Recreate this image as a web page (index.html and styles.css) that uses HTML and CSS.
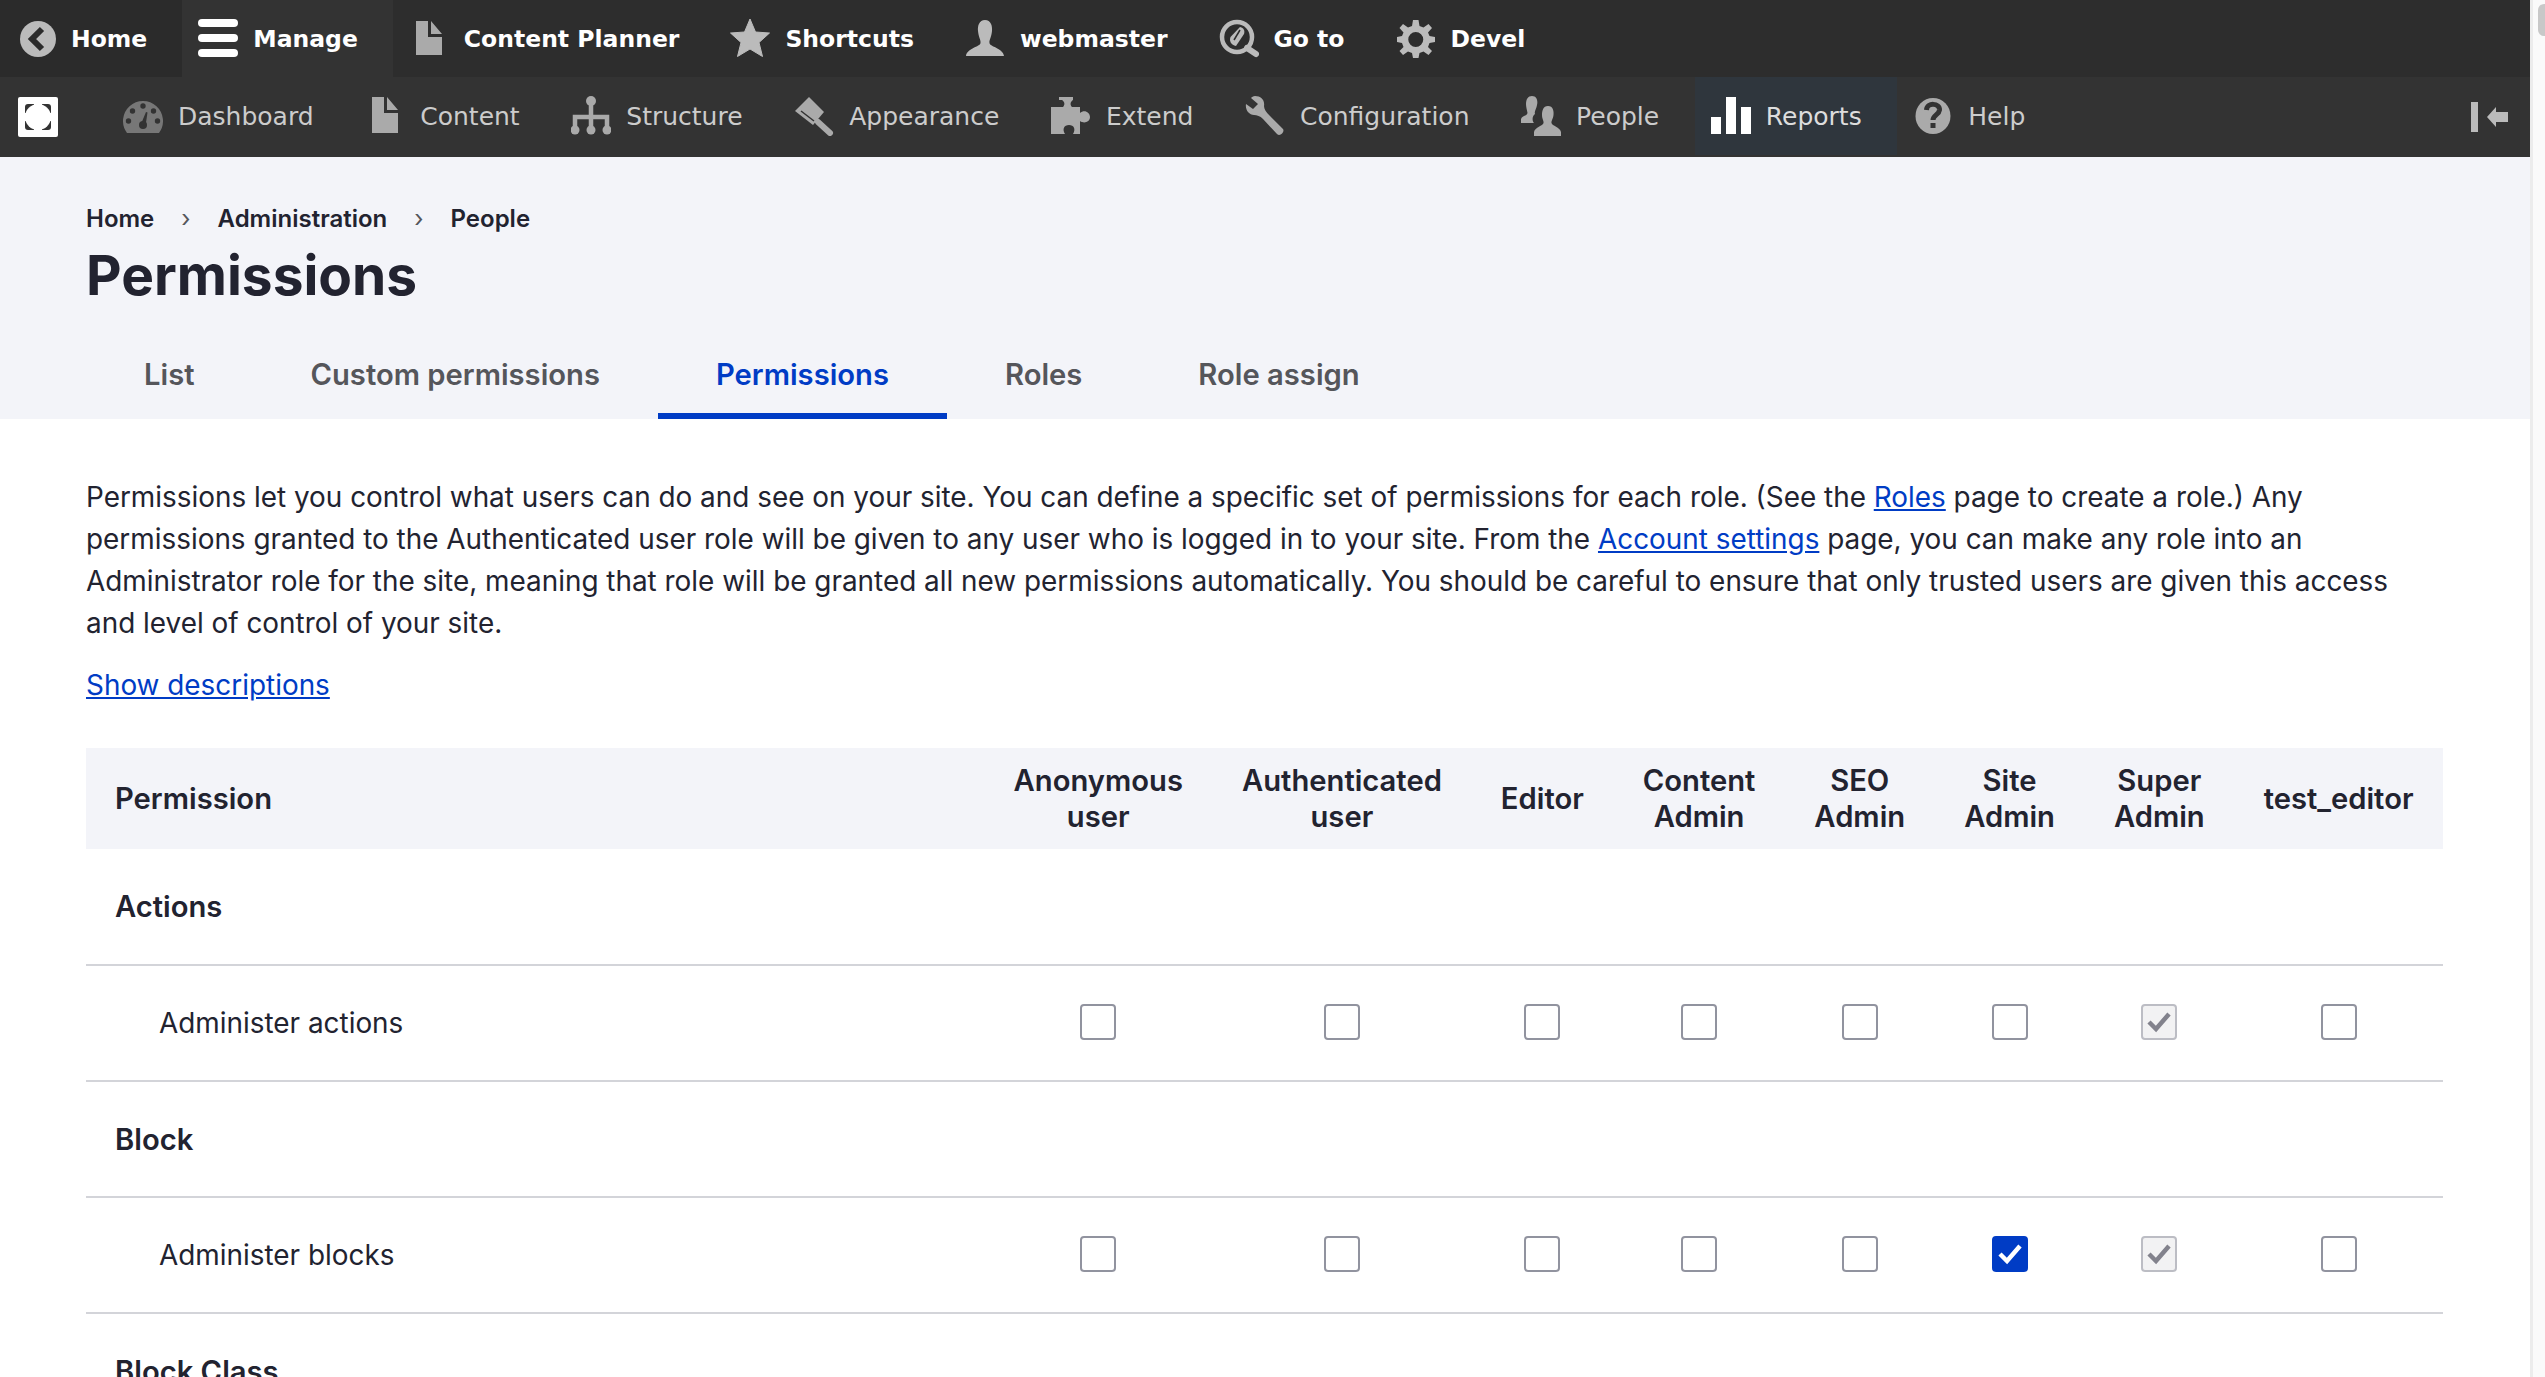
FILE: index.html

```html
<!DOCTYPE html>
<html lang="en">
<head>
    <meta charset="UTF-8">
    <meta name="viewport" content="width=device-width, initial-scale=1.0">
    <title>Permissions</title>
    <link rel="stylesheet" href="styles.css">
</head>
<body>
<div class="page">
    <nav class="toolbar-bar">
        <a class="bar-item bar-home" href="#">
            <svg class="icon" viewBox="0 0 40 40"><circle cx="22" cy="20" r="18" fill="#bbb"/><path d="M26 10 L16 20 L26 30" fill="none" stroke="#2b2b2b" stroke-width="6"/></svg>
            Home</a>
        <a class="bar-item bar-manage" href="#">
            <svg class="icon" viewBox="0 0 40 40"><rect x="0" y="0" width="40" height="8" rx="4" fill="#fff"/><rect x="0" y="15" width="40" height="8" rx="4" fill="#fff"/><rect x="0" y="30" width="40" height="8" rx="4" fill="#fff"/></svg>
            Manage</a>
        <a class="bar-item" href="#">
            <svg class="icon" viewBox="0 0 40 40"><path d="M7 2 H19 V18 H33 V36 H7 Z M22 2 L33 15 H22 Z" fill="#aaa"/></svg>
            Content Planner</a>
        <a class="bar-item" href="#">
            <svg class="icon" viewBox="0 0 40 40"><path d="M20 0 L25.500 13 L39.500 14 L29 23.500 L32.500 37.500 L20 30 L7.500 37.500 L11 23.500 L0.500 14 L14.500 13 Z" fill="#bbb" stroke="#bbb" stroke-linejoin="round"/></svg>
            Shortcuts</a>
        <a class="bar-item" href="#">
            <svg class="icon" viewBox="0 0 40 40"><path d="M20 1 C26 1 27.500 7 27 12 C26.500 18 24 21 24.500 24 C25 28 38 29 39 37 H1 C2 29 15 28 15.500 24 C16 21 13.500 18 13 12 C12.500 7 14 1 20 1 Z" fill="#bbb"/></svg>
            webmaster</a>
        <a class="bar-item" href="#">
            <svg class="icon" viewBox="0 0 40 40"><circle cx="18" cy="18" r="15" fill="none" stroke="#bbb" stroke-width="4.500"/><path d="M21 8 C25 9 26 12 25 15 L17 27 C12 26 10 22 11.500 18 Z" fill="#bbb"/><path d="M15 21 L21 11" stroke="#2d2d2d" stroke-width="1.500"/><path d="M28 29 L37 35" stroke="#bbb" stroke-width="6" stroke-linecap="round"/></svg>
            Go to</a>
        <a class="bar-item" href="#">
            <svg class="icon" viewBox="0 0 40 40"><path d="M17 1 H22.500 L23.500 7 L27.500 8.500 L32.500 5 L36 9 L32 13.500 L33.500 17 L39 18 V23 L33.500 24 L32 28 L36 32 L32.500 36 L27.500 32.500 L23.500 34 L22.500 39 H17 L16 34 L12 32.500 L7 36 L3.500 32 L7.500 28 L6 24 L1 23 V18 L6 17 L7.500 13.500 L3.500 9 L7 5 L12 8.500 L16 7 Z M19.750 13 A7.500 7.500 0 1 0 19.760 28 A7.500 7.500 0 1 0 19.750 13 Z" fill="#bbb" fill-rule="evenodd"/></svg>
            Devel</a>
    </nav>
    <nav class="toolbar-tray">
        <div class="tray-logo">
            <svg class="logo" viewBox="0 0 40 40"><rect width="40" height="40" rx="2" fill="#fff"/><rect x="7" y="7" width="26" height="26" rx="3" fill="#333"/><circle cx="20" cy="20" r="13" fill="#fff"/><rect x="16" y="5" width="8" height="30" fill="#fff"/><rect x="5" y="16" width="30" height="8" fill="#fff"/></svg>
        </div>
        <a class="tray-item" href="#">
            <svg class="icon" viewBox="0 0 40 40"><path d="M4 37 A20 20 0 1 1 36 37 Z" fill="#777"/><g fill="#333"><circle cx="20" cy="10" r="2.700"/><circle cx="9.500" cy="15" r="2.700"/><circle cx="30.500" cy="15" r="2.700"/><circle cx="5.500" cy="25" r="2.700"/><circle cx="34.500" cy="25" r="2.700"/><circle cx="20" cy="29" r="4"/><path d="M18 28 L23 16 L24.500 16.500 L22.500 30 Z"/></g></svg>
            Dashboard</a>
        <a class="tray-item" href="#">
            <svg class="icon" viewBox="0 0 40 40"><path d="M7 1 H19 V17 H33 V37 H7 Z M22 1 L33 14 H22 Z" fill="#aaa"/></svg>
            Content</a>
        <a class="tray-item" href="#">
            <svg class="icon" viewBox="0 0 40 40"><circle cx="20" cy="5" r="5" fill="#aaa"/><circle cx="4" cy="34" r="4.500" fill="#aaa"/><circle cx="20" cy="34" r="4.500" fill="#aaa"/><circle cx="36" cy="34" r="4.500" fill="#aaa"/><path d="M20 5 V34 M4 34 V21 H36 V34" fill="none" stroke="#aaa" stroke-width="4.500"/></svg>
            Structure</a>
        <a class="tray-item" href="#">
            <svg class="icon" viewBox="0 0 40 40"><path d="M15 1 L30 16 L19 29 L1 15 Z" fill="#aaa"/><path d="M7 15 L20 25" stroke="#333" stroke-width="1.500"/><path d="M24 26 L36 37" stroke="#aaa" stroke-width="6" stroke-linecap="round"/></svg>
            Appearance</a>
        <a class="tray-item" href="#">
            <svg class="icon" viewBox="0 0 40 40"><path d="M8 1 H22 V4 C19 6 19 9 21 11 H29 V17 C33 13 39 16 39 21 C39 26 33 28 29 25 V38 H22 C25 33 23 29 18 29 C13 29 11 33 14 38 H0 V11 H12 C14 9 14 6 11 4 H8 Z" fill="#aaa"/></svg>
            Extend</a>
        <a class="tray-item" href="#">
            <svg class="icon" viewBox="0 0 40 40"><path d="M10 0 C16 0 20 4 19 10 C19 13 21 16 25 20 L38 33 C40 36 35 41 32 38 L18 23 C15 20 12 19 9 19 C4 19 0 14 1 8 L8 13 L13 8 L6 2 C7 1 8 0 10 0 Z" fill="#aaa"/></svg>
            Configuration</a>
        <a class="tray-item" href="#">
            <svg class="icon" viewBox="0 0 40 40"><path d="M11 0 C16 0 17 5 16 9 C15.500 13 13 15 14 18 C11 20 11 25 13 27 H0 V23 C1 20 6 20 6.500 17 C6 14 5 11 5 8 C5 3 7 0 11 0 Z" fill="#aaa"/><path d="M27 10 C32 10 33 15 32.500 19 C32 23 30 25 30.500 27 C31 30 39 31 40 36 V40 H13 V36 C14 31 22 30 22.500 27 C23 25 21 23 21 19 C21 15 22 10 27 10 Z" fill="#aaa"/></svg>
            People</a>
        <a class="tray-item tray-active" href="#">
            <svg class="icon" viewBox="0 0 40 40"><rect x="0" y="21" width="10" height="17" fill="#fff"/><rect x="15" y="1" width="10" height="37" fill="#fff"/><rect x="30" y="11" width="10" height="27" fill="#fff"/></svg>
            Reports</a>
        <a class="tray-item" href="#">
            <svg class="icon" viewBox="0 0 40 40"><ellipse cx="20" cy="20" rx="17.500" ry="18" fill="#aaa"/><path d="M13.500 14 C14 6 27 7 26.500 14 C26 19 20 19 20 24" fill="none" stroke="#333" stroke-width="5"/><rect x="17.500" y="27" width="5" height="5" fill="#333"/></svg>
            Help</a>
        <svg class="collapse" viewBox="0 0 40 32"><rect x="1" y="1" width="7" height="30" fill="#bbb"/><path d="M17 16 L26 6 V11 H38 V21 H26 V26 Z" fill="#bbb"/></svg>
    </nav>

    <header class="page-head">
        <ol class="breadcrumb">
            <li><a href="#">Home</a></li>
            <li class="sep">›</li>
            <li><a href="#">Administration</a></li>
            <li class="sep">›</li>
            <li><a href="#">People</a></li>
        </ol>
        <h1>Permissions</h1>
        <ul class="tabs">
            <li><a href="#">List</a></li>
            <li><a href="#">Custom permissions</a></li>
            <li><a class="tab-active" href="#">Permissions</a></li>
            <li><a href="#">Roles</a></li>
            <li><a href="#">Role assign</a></li>
        </ul>
    </header>

    <main class="content">
        <p class="help-text">Permissions let you control what users can do and see on your site. You can define a specific set of permissions for each role. (See the <a href="#">Roles</a> page to create a role.) Any permissions granted to the Authenticated user role will be given to any user who is logged in to your site. From the <a href="#">Account settings</a> page, you can make any role into an Administrator role for the site, meaning that role will be granted all new permissions automatically. You should be careful to ensure that only trusted users are given this access and level of control of your site.</p>
        <p class="show-desc"><a href="#">Show descriptions</a></p>

        <table class="perm-table">
            <thead>
                <tr>
                    <th class="perm-name">Permission</th>
                    <th>Anonymous user</th>
                    <th>Authenticated user</th>
                    <th>Editor</th>
                    <th>Content Admin</th>
                    <th>SEO Admin</th>
                    <th>Site Admin</th>
                    <th>Super Admin</th>
                    <th>test_editor</th>
                </tr>
            </thead>
            <tbody>
                <tr class="group"><td colspan="9">Actions</td></tr>
                <tr>
                    <td class="perm-label">Administer actions</td>
                    <td><input type="checkbox"></td>
                    <td><input type="checkbox"></td>
                    <td><input type="checkbox"></td>
                    <td><input type="checkbox"></td>
                    <td><input type="checkbox"></td>
                    <td><input type="checkbox"></td>
                    <td><input type="checkbox" checked disabled></td>
                    <td><input type="checkbox"></td>
                </tr>
                <tr class="group"><td colspan="9">Block</td></tr>
                <tr>
                    <td class="perm-label">Administer blocks</td>
                    <td><input type="checkbox"></td>
                    <td><input type="checkbox"></td>
                    <td><input type="checkbox"></td>
                    <td><input type="checkbox"></td>
                    <td><input type="checkbox"></td>
                    <td><input type="checkbox" checked></td>
                    <td><input type="checkbox" checked disabled></td>
                    <td><input type="checkbox"></td>
                </tr>
                <tr class="group"><td colspan="9">Block Class</td></tr>
            </tbody>
        </table>
    </main>
</div>
<div class="scrollbar"><div class="thumb"></div></div>
</body>
</html>
```

FILE: styles.css

```css
html, body {
    height: 100%;
}
body {
    display: flex;
    margin: 0;
    overflow: hidden;
    font-family: "Inter", sans-serif;
    color: #222330;
    background-color: #fff;
}
.page {
    flex: 1;
    min-width: 0;
}
a {
    color: #003cc5;
}
.icon {
    width: 40px;
    height: 40px;
    flex: none;
}

/* toolbar */
.toolbar-bar, .toolbar-tray {
    display: flex;
    align-items: stretch;
    font-family: "DejaVu Sans", sans-serif;
}
.toolbar-bar {
    height: 77px;
    background-color: #2d2d2d;
    font-size: 23.5px;
    font-weight: 700;
}
.toolbar-tray {
    height: 80px;
    background-color: #333;
    font-size: 25px;
}
.bar-item, .tray-item {
    display: flex;
    align-items: center;
    gap: 15px;
    padding: 0 35px 0 16px;
    text-decoration: none;
    white-space: nowrap;
}
.bar-item {
    color: #fff;
}
.tray-item {
    padding-right: 35.6px;
    color: #ccc;
    margin-bottom: 2px;
}
.bar-home {
    background-color: #2b2b2b;
}
.bar-manage {
    background-color: #333;
}
.tray-active {
    background-color: #2f363d;
    color: #ddd;
}
.tray-logo {
    display: flex;
    align-items: center;
    width: 107px;
    padding-left: 18px;
    box-sizing: border-box;
}
.logo {
    width: 40px;
    height: 40px;
}
.collapse {
    width: 40px;
    height: 32px;
    margin: auto 20px auto auto;
}

/* header */
.page-head {
    height: 262px;
    box-sizing: border-box;
    padding: 41px 86px 0;
    background-color: #f3f4f9;
}
.breadcrumb {
    display: flex;
    align-items: center;
    gap: 27px;
    margin: 0;
    padding: 0;
    list-style: none;
    font-size: 24px;
    line-height: 42px;
    font-weight: 600;
}
.breadcrumb a {
    color: #222330;
    text-decoration: none;
}
.sep {
    color: #55565b;
    font-weight: 400;
}
h1 {
    margin: 0;
    font-size: 55px;
    line-height: 71px;
    font-weight: 700;
}
.tabs {
    display: flex;
    margin: 31px 0 0;
    padding: 0;
    list-style: none;
    font-size: 29.2px;
    font-weight: 600;
}
.tabs a {
    display: block;
    height: 77px;
    padding: 0 58px;
    line-height: 66px;
    color: #55565b;
    text-decoration: none;
}
.tabs a.tab-active {
    color: #003cc5;
    box-shadow: inset 0 -6px 0 #003cc5;
}

/* content */
.content {
    padding: 0 87px 0 86px;
}
.help-text {
    margin: 0;
    padding-top: 57px;
    font-size: 27.9px;
    line-height: 42px;
}
.show-desc {
    margin: 20px 0 42px;
    font-size: 27.9px;
    line-height: 42px;
}
.perm-table {
    width: 100%;
    border-collapse: collapse;
    font-size: 27.9px;
}
.perm-table th {
    height: 101px;
    padding: 0 29.5px;
    background-color: #f3f4f9;
    font-size: 29.2px;
    font-weight: 600;
    line-height: 36px;
    text-align: center;
}
.perm-table th.perm-name {
    width: 100%;
    padding-left: 29px;
    text-align: left;
}
.perm-table td {
    height: 114px;
    padding: 0 29.5px;
    border-bottom: 2px solid #d3d4d9;
    text-align: center;
}
.perm-table tbody tr:first-child td {
    height: 115px;
}
.perm-table td.perm-label {
    padding-left: 73px;
    text-align: left;
    white-space: nowrap;
}
.perm-table .group td {
    padding-left: 29px;
    font-size: 29.2px;
    font-weight: 600;
    text-align: left;
}

input[type="checkbox"] {
    display: block;
    appearance: none;
    width: 36px;
    height: 36px;
    margin: 0 auto 2px;
    border: 2px solid #91939f;
    border-radius: 4px;
    background-color: #fff;
}
input[type="checkbox"]:checked {
    border-color: #003cc5;
    background: #003cc5 url("data:image/svg+xml,%3Csvg xmlns='http://www.w3.org/2000/svg' viewBox='0 0 32 32'%3E%3Cpath d='M6 16 L13 23 L26 8' fill='none' stroke='%23fff' stroke-width='4.500'/%3E%3C/svg%3E") center/100% no-repeat;
}
input[type="checkbox"]:checked:disabled {
    border-color: #bcbdc4;
    background: #f2f2f3 url("data:image/svg+xml,%3Csvg xmlns='http://www.w3.org/2000/svg' viewBox='0 0 32 32'%3E%3Cpath d='M6 16 L13 23 L26 8' fill='none' stroke='%2382828c' stroke-width='4.500'/%3E%3C/svg%3E") center/100% no-repeat;
}

.scrollbar {
    flex: none;
    width: 15px;
    box-sizing: border-box;
    padding: 4px 0 0 5px;
    border-left: 3px solid #ececec;
    background-color: #fafafa;
}
.thumb {
    height: 32px;
    border-radius: 6px 0 0 6px;
    background-color: #c8c8c8;
}
```
